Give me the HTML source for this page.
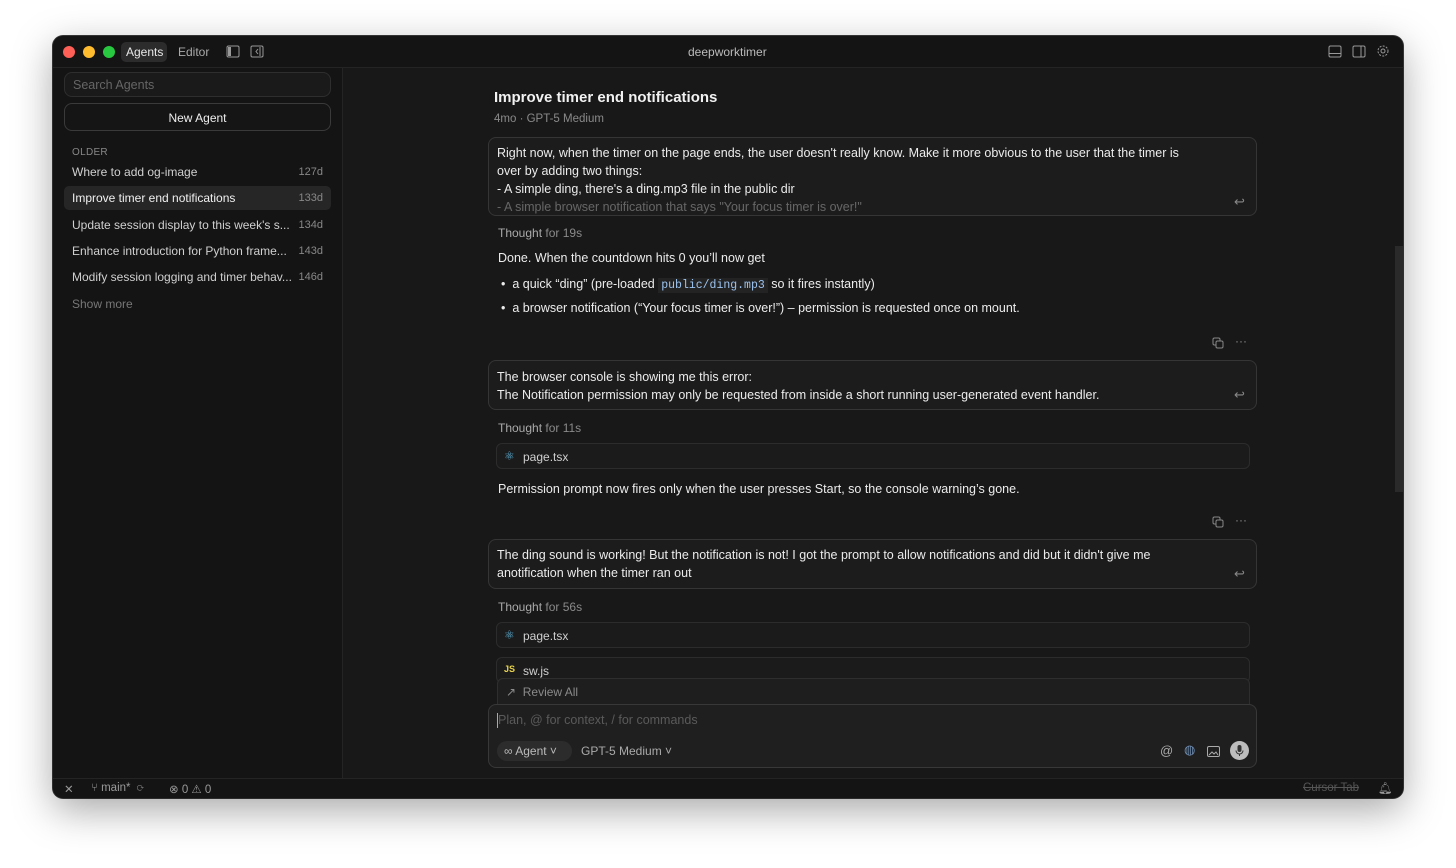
<!DOCTYPE html>
<html><head><meta charset="utf-8"><style>
*{box-sizing:border-box;margin:0;padding:0}
body{width:1456px;height:868px;background:#fff;font-family:"Liberation Sans",sans-serif;position:relative;overflow:hidden;font-size:12px;color:#e6e6e6}
.win{position:absolute;left:53px;top:36px;width:1350px;height:762px;background:#181818;border-radius:10px;overflow:hidden;box-shadow:0 12px 40px rgba(0,0,0,.35),0 0 0 1px #3a3a3a}
.a{position:absolute;white-space:nowrap}
.title{left:0;top:0;width:1350px;height:32px;background:#141414;border-bottom:1px solid #242424}
.side{left:0;top:32px;width:290px;height:710px;background:#141414;border-right:1px solid #242424}
.status{left:0;top:742px;width:1350px;height:20px;background:#141414;border-top:1px solid #242424;color:#999;font-size:11.5px}
.dot{position:absolute;top:10px;width:12px;height:12px;border-radius:50%}
.box{position:absolute;border:1px solid #353535;border-radius:8px;background:#1c1c1c}
.t13{font-size:12.5px;color:#ececec}
.gray{color:#8a8a8a}
.item{position:absolute;left:11px;width:267px;height:24px;border-radius:5px;font-size:12px;color:#d0d0d0;padding:5px 8px}
.item span{position:absolute;right:8px;top:6px;color:#888;font-size:11px}
.file{position:absolute;left:443px;width:754px;height:26px;border:1px solid #2c2c2c;border-radius:6px;background:#1b1b1b;font-size:12px;color:#cfcfcf;padding:6px 0 0 26px}
</style></head><body>
<div class="win">
 <div class="a title">
  <div class="dot" style="left:10px;background:#fe5f57"></div>
  <div class="dot" style="left:30px;background:#febc2e"></div>
  <div class="dot" style="left:50px;background:#28c840"></div>
  <div class="a" style="left:68px;top:6px;width:46px;height:20px;background:#2c2c2c;border-radius:5px;color:#e8e8e8;font-size:12px;padding:3px 0 0 5px">Agents</div>
  <div class="a" style="left:125px;top:9px;color:#aaa;font-size:12px">Editor</div>
  <svg class="a" style="left:173px;top:9px" width="14" height="13"><rect x="1" y="1" width="12" height="11" rx="1.5" fill="none" stroke="#999"/><rect x="2" y="2" width="3" height="9" fill="#999"/></svg>
  <svg class="a" style="left:197px;top:9px" width="14" height="13"><rect x="1" y="1" width="12" height="11" rx="1.5" fill="none" stroke="#999"/><path d="M8 4 L6 6.5 L8 9 M10 2 V11" fill="none" stroke="#999"/></svg>
  <div class="a" style="left:635px;top:9px;color:#bbb;font-size:12px">deepworktimer</div>
  <svg class="a" style="left:1275px;top:9px" width="14" height="13"><rect x="1" y="1" width="12" height="11" rx="1.5" fill="none" stroke="#999"/><path d="M1 8.5H13" stroke="#999"/></svg>
  <svg class="a" style="left:1299px;top:9px" width="14" height="13"><rect x="1" y="1" width="12" height="11" rx="1.5" fill="none" stroke="#999"/><path d="M9 1V12" stroke="#999"/></svg>
  <svg class="a" style="left:1323px;top:8px" width="14" height="14" viewBox="0 0 14 14"><circle cx="7" cy="7" r="2" fill="none" stroke="#999"/><circle cx="7" cy="7" r="5" fill="none" stroke="#999" stroke-dasharray="2 1.3"/></svg>
 </div>
 <div class="a side">
  <div class="box" style="left:11px;top:4px;width:267px;height:25px;background:#1a1a1a;border-color:#2e2e2e;color:#666;font-size:12.5px;padding:5px 8px">Search Agents</div>
  <div class="box" style="left:11px;top:35px;width:267px;height:28px;background:#151515;border-color:#3a3a3a;color:#eee;font-size:12px;text-align:center;padding-top:7px">New Agent</div>
  <div class="a" style="left:19px;top:79px;color:#888;font-size:10px;letter-spacing:.3px">OLDER</div>
  <div class="item" style="top:92px">Where to add og-image<span>127d</span></div>
  <div class="item" style="top:118px;background:#262626;color:#f0f0f0">Improve timer end notifications<span>133d</span></div>
  <div class="item" style="top:145px">Update session display to this week's s...<span>134d</span></div>
  <div class="item" style="top:171px">Enhance introduction for Python frame...<span>143d</span></div>
  <div class="item" style="top:197px">Modify session logging and timer behav...<span>146d</span></div>
  <div class="item" style="top:224px;color:#777">Show more</div>
 </div>
 <div class="a" style="left:1342px;top:210px;width:8px;height:246px;background:#2a2a2a"></div>

 <div class="a" style="left:441px;top:53px;font-size:15px;font-weight:bold;color:#f2f2f2">Improve timer end notifications</div>
 <div class="a gray" style="left:441px;top:77px;font-size:11.5px">4mo · GPT-5 Medium</div>

 <div class="box" style="left:435px;top:101px;width:769px;height:79px;overflow:hidden">
  <div class="a t13" style="left:8px;top:6px;line-height:18px;white-space:normal;width:705px">Right now, when the timer on the page ends, the user doesn't really know. Make it more obvious to the user that the timer is over by adding two things:<br>- A simple ding, there's a ding.mp3 file in the public dir<br><span style="opacity:.35">- A simple browser notification that says "Your focus timer is over!"</span></div>
  <div class="a" style="left:745px;top:56px;color:#888;font-size:13px">↩</div>
 </div>
 <div class="a gray" style="left:445px;top:190px;font-size:12px"><span style="color:#aaa">Thought</span> for 19s</div>
 <div class="a t13" style="left:445px;top:215px">Done. When the countdown hits 0 you’ll now get</div>
 <div class="a t13" style="left:448px;top:241px">•&nbsp; a quick “ding” (pre-loaded <span style="font-family:'Liberation Mono',monospace;font-size:11.5px;color:#9cc3ef;background:#232323;padding:1px 3px">public/ding.mp3</span> so it fires instantly)</div>
 <div class="a t13" style="left:448px;top:265px">•&nbsp; a browser notification (“Your focus timer is over!”) – permission is requested once on mount.</div>
 <svg class="a" style="left:1159px;top:301px" width="12" height="12"><rect x="1" y="1" width="7" height="7" rx="1.5" fill="none" stroke="#888"/><rect x="4" y="4" width="7" height="7" rx="1.5" fill="#181818" stroke="#888"/></svg>
 <div class="a gray" style="left:1182px;top:298px">···</div>

 <div class="box" style="left:435px;top:324px;width:769px;height:50px">
  <div class="a t13" style="left:8px;top:7px;line-height:18px">The browser console is showing me this error:<br>The Notification permission may only be requested from inside a short running user-generated event handler.</div>
  <div class="a" style="left:745px;top:26px;color:#888;font-size:13px">↩</div>
 </div>
 <div class="a gray" style="left:445px;top:385px"><span style="color:#aaa">Thought</span> for 11s</div>
 <div class="file" style="top:407px"><span class="a" style="left:7px;top:5px;color:#5fb3d9">⚛</span>page.tsx</div>
 <div class="a t13" style="left:445px;top:446px">Permission prompt now fires only when the user presses Start, so the console warning’s gone.</div>
 <svg class="a" style="left:1159px;top:480px" width="12" height="12"><rect x="1" y="1" width="7" height="7" rx="1.5" fill="none" stroke="#888"/><rect x="4" y="4" width="7" height="7" rx="1.5" fill="#181818" stroke="#888"/></svg>
 <div class="a gray" style="left:1182px;top:477px">···</div>

 <div class="box" style="left:435px;top:503px;width:769px;height:50px">
  <div class="a t13" style="left:8px;top:6px;line-height:18px">The ding sound is working! But the notification is not! I got the prompt to allow notifications and did but it didn't give me<br>anotification when the timer ran out</div>
  <div class="a" style="left:745px;top:26px;color:#888;font-size:13px">↩</div>
 </div>
 <div class="a gray" style="left:445px;top:564px"><span style="color:#aaa">Thought</span> for 56s</div>
 <div class="file" style="top:586px"><span class="a" style="left:7px;top:5px;color:#5fb3d9">⚛</span>page.tsx</div>
 <div class="file" style="top:621px"><span class="a" style="left:7px;top:6px;color:#e8d44d;font-weight:bold;font-size:9px">JS</span>sw.js</div>
 <div class="a" style="left:444px;top:642px;width:753px;height:30px;background:#1e1e1e;border:1px solid #2e2e2e;border-radius:6px 6px 0 0;color:#8a8a8a;font-size:12px;padding:6px 0 0 8px">↗&nbsp;&nbsp;Review All</div>
 <div class="box" style="left:435px;top:668px;width:769px;height:64px;background:#1f1f1f;border-color:#383838">
  <div class="a" style="left:8px;top:8px;width:1px;height:15px;background:#aaa"></div>
  <div class="a" style="left:9px;top:8px;color:#5a5a5a;font-size:12.5px">Plan, @ for context, / for commands</div>
  <div class="a" style="left:8px;top:36px;width:75px;height:20px;border-radius:10px;background:#2c2c2c;color:#bbb;font-size:12px;padding:3px 0 0 7px">∞ Agent ˅</div>
  <div class="a" style="left:92px;top:39px;color:#aaa;font-size:12px">GPT-5 Medium ˅</div>
  <div class="a" style="left:671px;top:38px;color:#aaa;font-size:13px">@</div>
  <div class="a" style="left:695px;top:37px;color:#6f8fb5;font-size:13px">◍</div>
  <svg class="a" style="left:718px;top:41px" width="13" height="11"><rect x=".5" y=".5" width="12" height="10" rx="1.5" fill="none" stroke="#aaa"/><path d="M2 9L5 6L7 8L9 6L11 9" stroke="#aaa" fill="none"/></svg>
  <div class="a" style="left:741px;top:36px;width:19px;height:19px;border-radius:50%;background:#bdbdbd"><svg width="19" height="19"><rect x="7.5" y="4" width="4" height="7" rx="2" fill="#333"/><path d="M6 9.5a3.5 3.5 0 0 0 7 0M9.5 13v2" stroke="#333" fill="none"/></svg></div>
 </div>

 <div class="a status">
  <div class="a" style="left:11px;top:3px">✕</div>
  <div class="a" style="left:38px;top:3px">⑂ main* &nbsp;⟳</div>
  <div class="a" style="left:116px;top:3px">⊗ 0 ⚠ 0</div>
  <div class="a" style="left:1250px;top:3px;color:#555;text-decoration:line-through">Cursor Tab</div>
  <div class="a" style="left:1325px;top:2px">🔔︎</div>
 </div>
</div>
</body></html>
